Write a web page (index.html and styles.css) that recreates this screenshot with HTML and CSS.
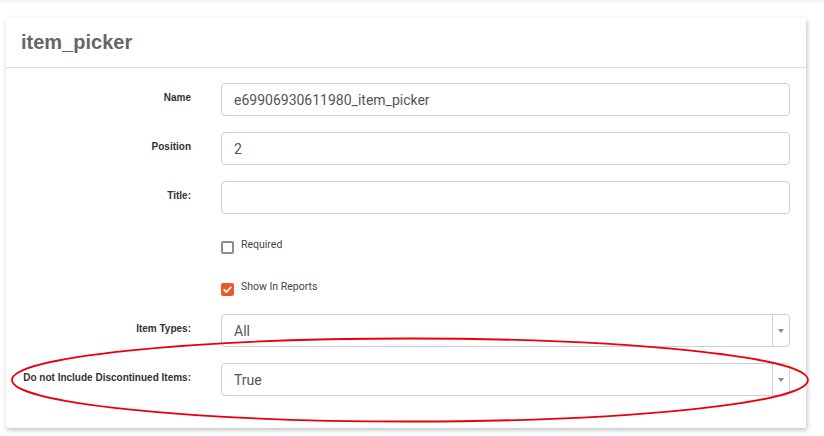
FILE: index.html
```html
<!DOCTYPE html>
<html>
<head>
<meta charset="utf-8">
<link rel="stylesheet" href="styles.css">
</head>
<body>
<div class="topband"></div>
<div class="card">
  <div class="card-header"><h2 class="card-title">item_picker</h2></div>
  <form class="card-body">
    <div class="row">
      <label class="lbl">Name</label>
      <div class="field"><input class="input" value="e69906930611980_item_picker"></div>
    </div>
    <div class="row">
      <label class="lbl">Position</label>
      <div class="field"><input class="input" value="2"></div>
    </div>
    <div class="row">
      <label class="lbl">Title:</label>
      <div class="field"><input class="input" value=""></div>
    </div>
    <div class="row row-check">
      <div class="lbl"></div>
      <div class="field check">
        <span class="box"></span><span class="check-text">Required</span>
      </div>
    </div>
    <div class="row row-check">
      <div class="lbl"></div>
      <div class="field check">
        <span class="box checked"><svg viewBox="0 0 13 13" width="13" height="13"><path d="M3.2 6.8 L5.4 9 L9.8 4.4" fill="none" stroke="#fff" stroke-width="1.8" stroke-linecap="round" stroke-linejoin="round"/></svg></span><span class="check-text">Show In Reports</span>
      </div>
    </div>
    <div class="row">
      <label class="lbl">Item Types:</label>
      <div class="field"><div class="select"><span class="select-val">All</span><span class="select-arrow"><span class="tri"></span></span></div></div>
    </div>
    <div class="row last">
      <label class="lbl">Do not Include Discontinued Items:</label>
      <div class="field"><div class="select"><span class="select-val">True</span><span class="select-arrow"><span class="tri"></span></span></div></div>
    </div>
  </form>
  <svg class="ellipse" width="824" height="436" viewBox="0 0 824 436"><ellipse cx="410" cy="380" rx="398" ry="41.5" fill="none" stroke="#e8000b" stroke-width="1.8"/></svg>
</div>
</body>
</html>
```
FILE: styles.css
```css
html, body {
  margin: 0;
  padding: 0;
  background: #ffffff;
  width: 824px;
  height: 436px;
  overflow: hidden;
  font-family: Roboto, "Liberation Sans", Arial, sans-serif;
}
.topband {
  height: 3px;
  background: #f6f6f6;
}
.card {
  position: relative;
  margin: 15px 0 0 6px;
  width: 800px;
  background: #fff;
  box-shadow: 1px 2px 5px rgba(0,0,0,0.25);
  border-radius: 2px;
}
.card-header {
  height: 49px;
  border-bottom: 1px solid #dedede;
  padding: 0 15px;
  display: flex;
  align-items: center;
}
.card-title {
  margin: 0;
  font-family: "Liberation Sans", Arial, sans-serif;
  font-weight: bold;
  font-size: 20px;
  color: #666;
  padding-bottom: 0;
}
.card-body {
  padding: 15px 16px 32px 15px;
  display: flex;
  flex-direction: column;
  gap: 16px;
}
.row {
  display: grid;
  grid-template-columns: 170px 1fr;
  column-gap: 30px;
  align-items: start;
}
.lbl {
  text-align: right;
  white-space: nowrap;
  font-family: "Liberation Sans", Arial, sans-serif;
  font-weight: bold;
  font-size: 10px;
  line-height: 13px;
  color: #333;
  padding-top: 8px;
}
.input {
  box-sizing: border-box;
  width: 100%;
  height: 33px;
  border: 1px solid #cfcfcf;
  border-radius: 4px;
  padding: 0 12px;
  font-family: Roboto, "Liberation Sans", sans-serif;
  font-size: 14px;
  color: #555;
  background: #fff;
  outline: none;
  display: block;
}
.row-check {
  height: 26px;
}
.check {
  display: flex;
  align-items: flex-start;
  gap: 7px;
  padding-top: 9px;
}
.box {
  box-sizing: border-box;
  margin-top: 2px;
  width: 13px;
  height: 13px;
  border: 2px solid #8d8b9b;
  border-radius: 2px;
  display: block;
  flex: none;
}
.box.checked {
  border: none;
  background: #e95a2a;
}
.box svg { display: block; }
.check-text {
  font-family: Roboto, "Liberation Sans", sans-serif;
  font-size: 10.5px;
  line-height: 13px;
  color: #444;
  margin-top: -1px;
}
.select {
  box-sizing: border-box;
  height: 33px;
  border: 1px solid #cfcfcf;
  border-radius: 4px;
  display: flex;
  align-items: stretch;
}
.select-val {
  flex: 1;
  padding-left: 12px;
  font-size: 14px;
  color: #555;
  display: flex;
  align-items: center;
}
.select-arrow {
  width: 16px;
  border-left: 1px solid #cfcfcf;
  display: flex;
  align-items: center;
  justify-content: center;
}
.tri {
  width: 0;
  height: 0;
  border-left: 3px solid transparent;
  border-right: 3px solid transparent;
  border-top: 4px solid #888;
}
.ellipse {
  position: absolute;
  left: -6px;
  top: -18px;
  pointer-events: none;
}
```
